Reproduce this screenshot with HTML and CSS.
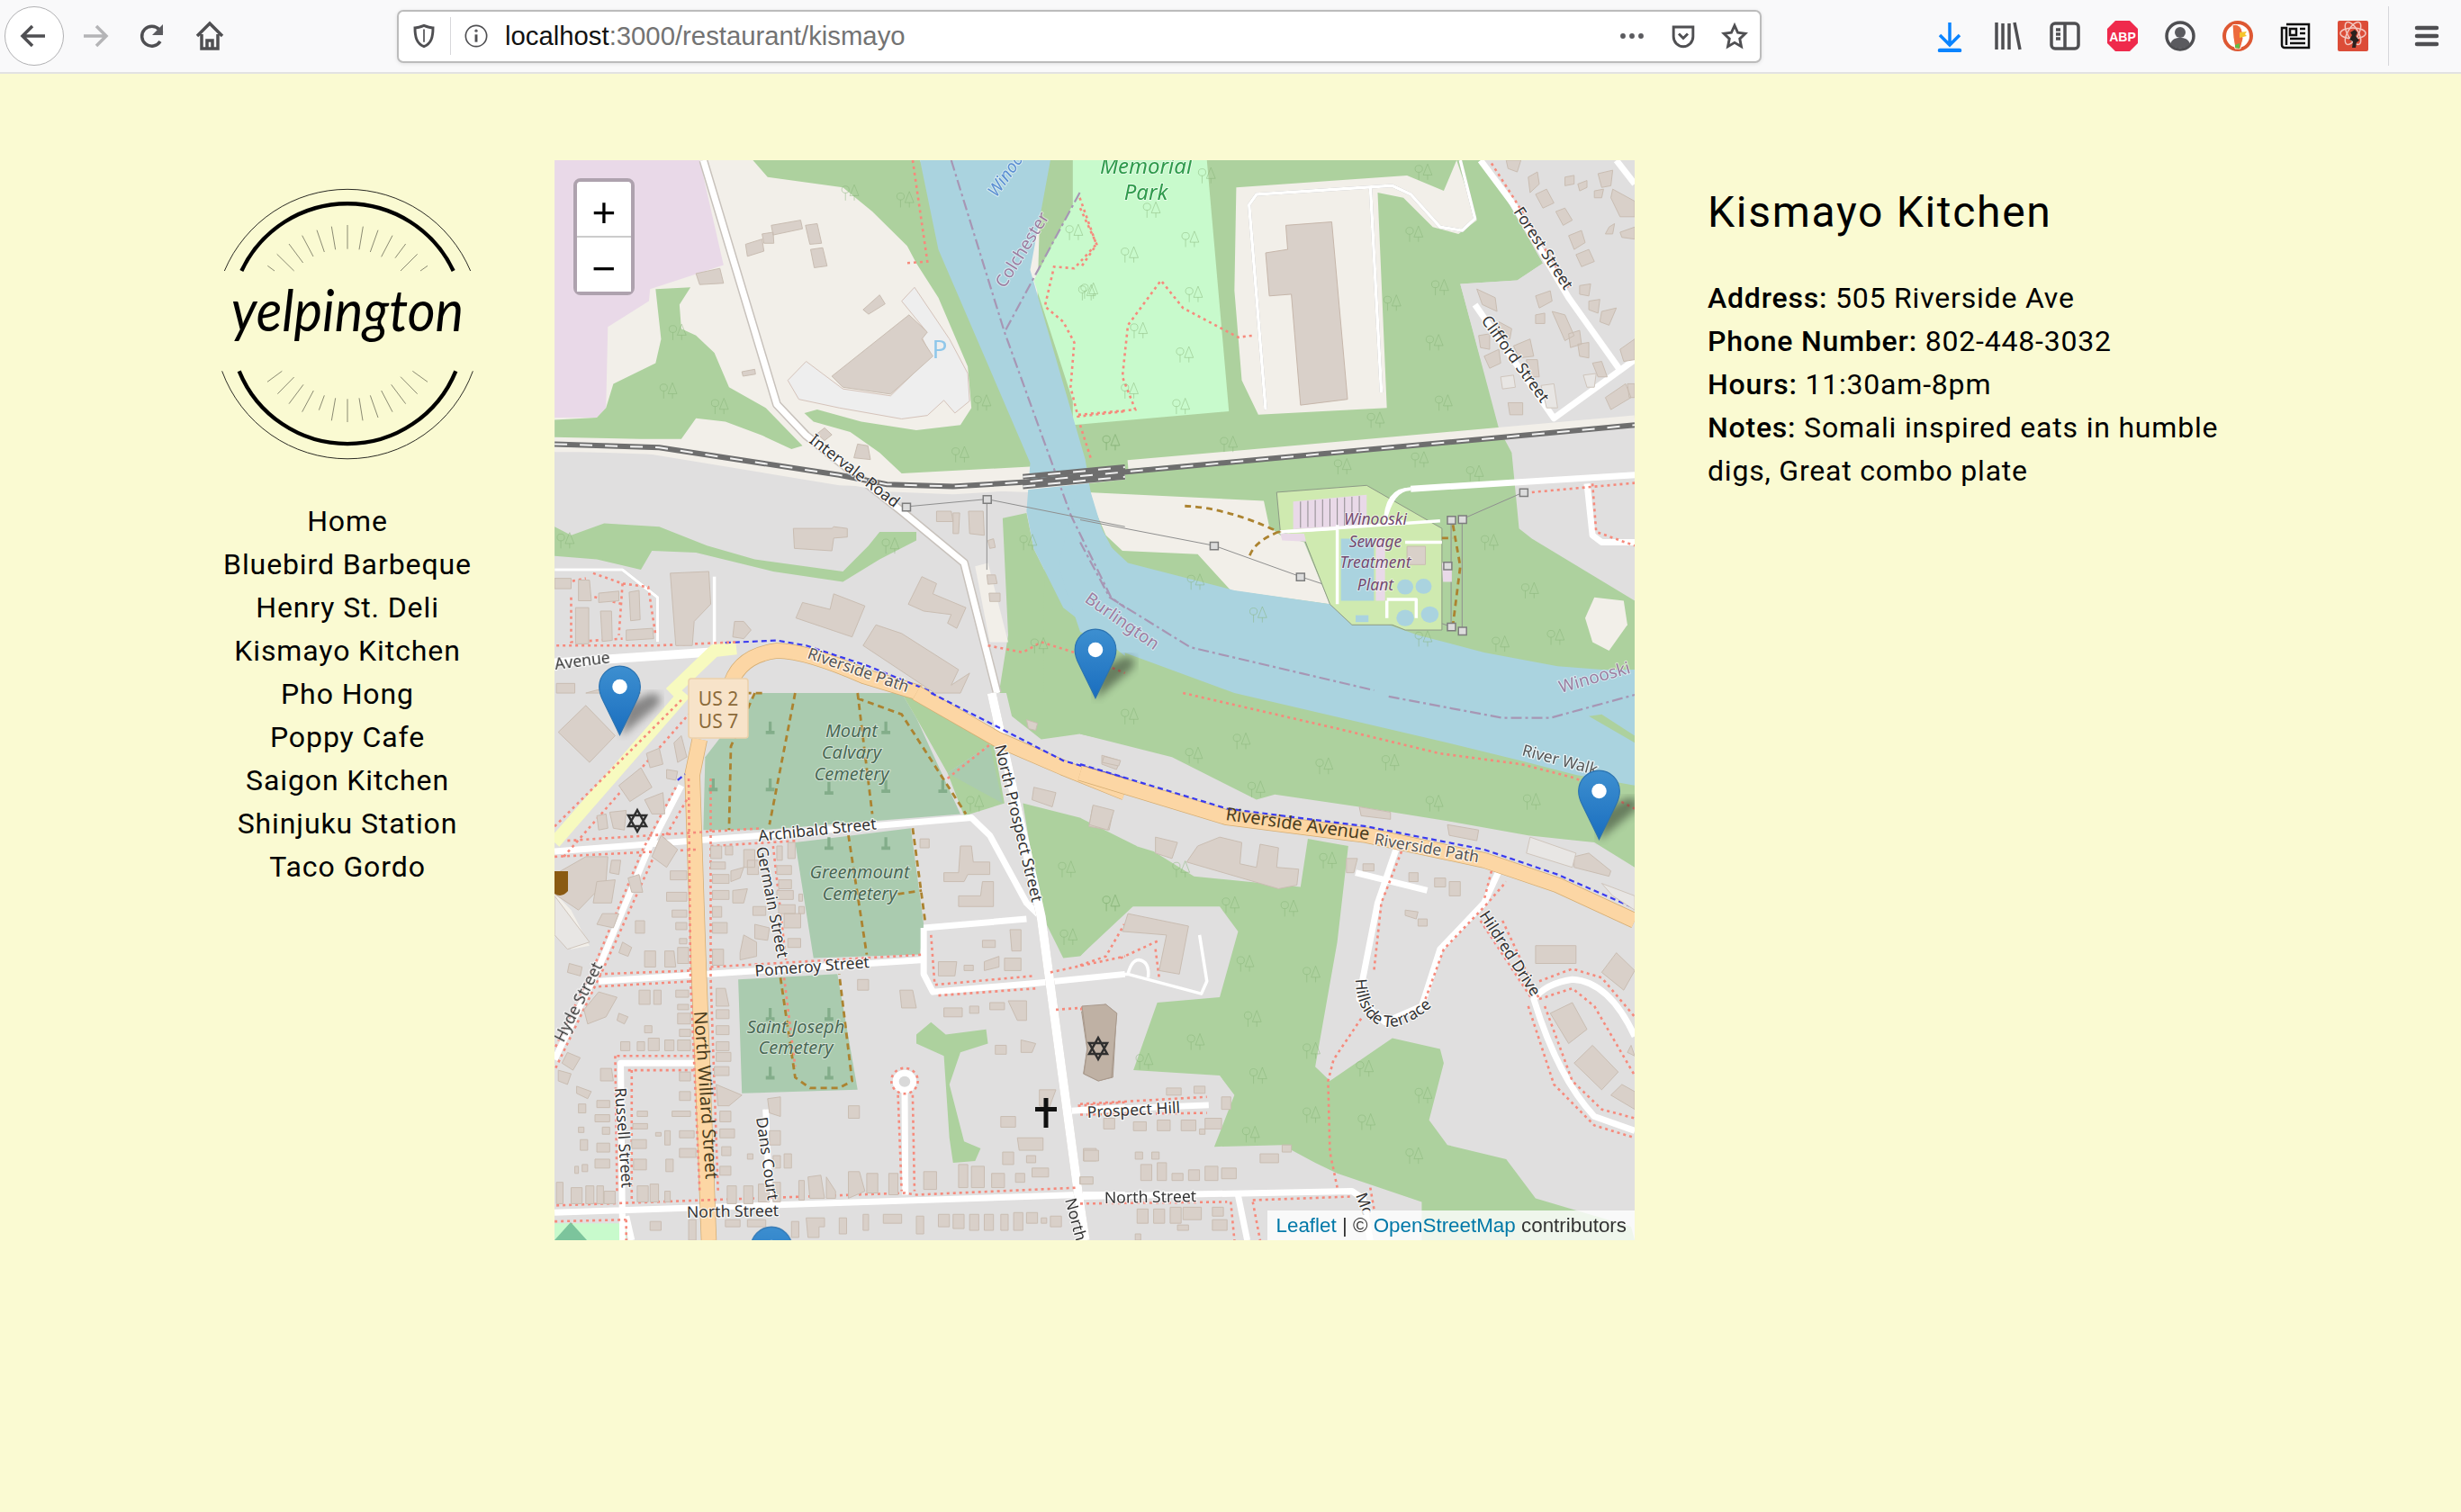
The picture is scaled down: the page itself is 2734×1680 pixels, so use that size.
FILE: index.html
```html
<!DOCTYPE html>
<html>

<head>
    <title>Yelpington</title>
    <link rel="stylesheet" href="styles.css">
</head>

<body>
    <!-- browser toolbar -->
    <div class="toolbar">
        <div class="back-btn">
            <svg class="icon" viewBox="0 0 36 36"><path class="ic" d="M30 18H6M16 7 5 18l11 11"/></svg>
        </div>
        <div class="tool-btn">
            <svg class="icon" viewBox="0 0 36 36"><path class="ic ic-off" d="M6 18h24M20 7l11 11-11 11"/></svg>
        </div>
        <div class="tool-btn">
            <svg class="icon" viewBox="0 0 36 36"><path class="ic" d="M27 24a11 11 0 1 1-1-13l3 4"/><path class="ic-fill" d="M30 5v12H18z"/></svg>
        </div>
        <div class="tool-btn">
            <svg class="icon" viewBox="0 0 36 36"><path class="ic" d="M4 18 18 4l14 14M9 16v16h18V16"/><path class="ic" d="M15 32v-9h6v9"/></svg>
        </div>

        <div class="urlbar">
            <svg class="url-icon" viewBox="0 0 36 36"><path class="ic" d="M18 4c5 2 8 3 12 3 0 12-2 21-12 25C8 28 6 19 6 7c4 0 7-1 12-3z"/><path class="ic-thin" d="M18 9v17"/></svg>
            <div class="url-sep"></div>
            <svg class="url-icon" viewBox="0 0 36 36"><circle class="ic-thin" cx="18" cy="18" r="14"/><path class="ic" d="M18 16v10"/><circle class="ic-fill" cx="18" cy="11" r="2"/></svg>
            <div class="url-text">localhost<span class="url-rest">:3000/restaurant/kismayo</span></div>
            <svg class="url-icon url-end" viewBox="0 0 36 36"><circle class="ic-fill" cx="6" cy="18" r="3.5"/><circle class="ic-fill" cx="18" cy="18" r="3.5"/><circle class="ic-fill" cx="30" cy="18" r="3.5"/></svg>
            <svg class="url-icon url-end" viewBox="0 0 36 36"><path class="ic" d="M5 6h26v13a13 13 0 0 1-26 0z"/><path class="ic" d="m12 15 6 6 6-6"/></svg>
            <svg class="url-icon url-end" viewBox="0 0 36 36"><path class="ic" d="m18 4 4.300 9.500 10 1.200-7.400 7 2 10.300L18 26.800 9.100 32l2-10.300-7.400-7 10-1.200z"/></svg>
        </div>

        <div class="tool-btn tool-first">
            <svg class="icon" viewBox="0 0 36 36"><path class="ic-blue" d="M18 3v25M7 17l11 11 11-11"/><path class="ic-blue ic-wide" d="M7 34h22"/></svg>
        </div>
        <div class="tool-btn">
            <svg class="icon" viewBox="0 0 36 36"><path class="ic" d="M6 3v30M13 4v29M20 4v29M26 3l6 30"/></svg>
        </div>
        <div class="tool-btn">
            <svg class="icon" viewBox="0 0 36 36"><rect class="ic" x="3" y="4" width="30" height="28" rx="4"/><path class="ic" d="M18 4v28M8 11h5M8 16h5M8 21h5"/></svg>
        </div>
        <div class="tool-btn">
            <svg class="icon" viewBox="0 0 36 36"><path class="abp" d="M10 1h16l9 9v16l-9 9H10l-9-9V10z"/><text class="abp-text" x="18" y="24">ABP</text></svg>
        </div>
        <div class="tool-btn">
            <svg class="icon" viewBox="0 0 36 36"><circle class="ic" cx="18" cy="18" r="15"/><circle class="ic-fill" cx="18" cy="14" r="6"/><path class="ic-fill" d="M7 27c2-6 6-7 11-7s9 1 11 7c-6 6-16 6-22 0z"/></svg>
        </div>
        <div class="tool-btn">
            <svg class="icon" viewBox="0 0 36 36"><circle class="ddg" cx="18" cy="18" r="17"/><circle class="ddg-in" cx="18" cy="18" r="14"/><path class="ddg-duck" d="M12 6c5-2 10 1 11 7l1 8-3 11h-6l-2-12z"/><path class="ddg-bill" d="m20 14 8-1-2 3 2 2-8 2z"/><path class="ddg-tie" d="m15 28 5-2v6l-5-1z"/></svg>
        </div>
        <div class="tool-btn">
            <svg class="icon" viewBox="0 0 36 36"><path class="ic-black" d="M8 5h25v26H6a3 3 0 0 1-3-3V9h5v19"/><path class="ic-black" d="M12 10h7v7h-7zM23 10h6M23 15h6M12 21h17M12 26h17"/></svg>
        </div>
        <div class="tool-btn">
            <svg class="icon" viewBox="0 0 36 36"><rect class="react-bg" x="1" y="1" width="34" height="34" rx="2"/><ellipse class="react-ring" cx="18" cy="15" rx="14" ry="6"/><ellipse class="react-ring" cx="18" cy="15" rx="14" ry="6" transform="rotate(60 18 15)"/><ellipse class="react-ring" cx="18" cy="15" rx="14" ry="6" transform="rotate(-60 18 15)"/><path class="react-man" d="M20 11l3 3-2 4 4 5-3 2-1 6h-4l1-7-4-2 3-5-2-3z"/></svg>
        </div>
        <div class="tool-sep"></div>
        <div class="tool-btn">
            <svg class="icon" viewBox="0 0 36 36"><path class="ic ic-wide" d="M7 9h22M7 18h22M7 27h22"/></svg>
        </div>
    </div>

    <div class="page">
        <div class="sidebar">
            <svg class="logo" viewBox="0 0 1140 1020">
                <path class="arc-thin" d="M148 333A445 445 0 0 1 968 333"/>
                <path class="arc-thick" d="M205 333A390 390 0 0 1 911 333"/>
                <path class="arc-thin" d="M140 667A445 445 0 0 0 976 667"/>
                <path class="arc-thick" d="M197 667A390 390 0 0 0 919 667"/>
                <path class="rays" d="M292 316 315 333M323 277 380 333M363 243 410 306M407 215 444 285M456 197 481 270M505 185 518 262M558 180V260M610 185 597 262M660 197 634 270M708 215 671 286M752 243 717 290M791 277 735 333M825 316 801 333"/>
                <path class="rays" d="M340 667 291 703M380 687 325 743M411 712 363 776M445 732 407 803M481 748 463 797M518 757 505 832M558 760V837M597 757 609 832M634 748 660 822M671 732 708 803M704 712 752 776M735 686 791 743M775 667 825 703"/>
                <text class="logo-text" x="558" y="535" textLength="775" lengthAdjust="spacingAndGlyphs">yelpington</text>
            </svg>
            <nav class="nav">
                <a href="#">Home</a>
                <a href="#">Bluebird Barbeque</a>
                <a href="#">Henry St. Deli</a>
                <a href="#">Kismayo Kitchen</a>
                <a href="#">Pho Hong</a>
                <a href="#">Poppy Cafe</a>
                <a href="#">Saigon Kitchen</a>
                <a href="#">Shinjuku Station</a>
                <a href="#">Taco Gordo</a>
            </nav>
        </div>

        <div class="map">
            <svg class="map-svg" viewBox="0 0 1200 1200">
                <defs>
                    <g id="t"><circle cx="12" cy="16" r="10"/><path d="M12 26v22M36 2l12 32H24zM36 34v14"/></g>
                    <g id="c"><path d="M8 0h8v26h8v10H0V26h8z"/></g>
                    <g id="pin">
                        <path class="pin-body" d="M12.500.6C5.900.6.6 6 .6 12.500c0 2.500 1 5.800 2.400 8.500l9.500 19.400L22 21c1.400-2.700 2.400-6 2.400-8.500C24.400 6 19.100.6 12.500.6z"/>
                        <circle class="pin-dot" cx="12.500" cy="12.500" r="4.300"/>
                    </g>
                    <linearGradient id="pinfill" x1="0" y1="0" x2="0" y2="1">
                        <stop offset="0" stop-color="#3d8fd0"/>
                        <stop offset="1" stop-color="#1a6ebf"/>
                    </linearGradient>
                    <filter id="soft"><feGaussianBlur stdDeviation="5"/></filter>
                </defs>

                <g class="tiles">
                    <rect class="grey" width="1200" height="1200"/>

                    <!-- land -->
                    <g class="q1">
                        <path class="plain" d="M15 21H1568V985H1310L790 965 240 868H15z"/>
                        <path class="school" d="M15 21H410L475 325 275 395 272 430 160 505 155 740 130 768H15z"/>
                        <path class="wood" d="M555 21H1010L1320 910 960 930 900 870 820 810 720 780 695 755 730 745 850 780 1000 805 1120 790 1150 740 1140 620 1060 420 1000 320 975 270 880 170 800 100 595 70z"/>
                        <path class="wood" d="M15 775 130 768 155 740 175 670 290 610 305 540 290 395 385 390 355 440 360 510 400 530 450 580 490 680 590 740 690 850 660 860 580 820 480 780 400 770 360 830 250 830 15 825z"/>
                        <path class="wood" d="M15 1085 60 1110 150 1075 300 1085 430 1140 560 1180 800 1215 870 1140 900 1100 1000 1100 1000 1125 900 1180 800 1245 610 1215 400 1160 280 1155 250 1210 130 1180 15 1170z"/>
                        <path class="wood" d="M1235 1060 1300 1045 1320 1150 1400 1320 1568 1440V1568H1225L1250 1400z"/>
                        <path class="plain" d="M1160 1200 1195 1190 1250 1420H1200z"/>
                        <path class="wood" d="M1340 21H1568V1000H1460L1320 800z"/>
                    </g>
                    <g class="q2">
                        <path class="wood" d="M-90 21H1100L1180 170 1260 320 1190 370 1035 380 1140 800 1175 870 1195 1090 1230 1120 1510 1300V1568H-100z"/>
                    </g>
                    <g class="q1">
                        <path class="park" d="M1445 21H1568V750L1440 770 1420 700 1320 370 1445 110z"/>
                    </g>
                    <g class="q2">
                        <path class="park" d="M-20 21H345L405 750-20 790z"/>
                        <path class="plain" d="M425 100 890 65 990 110 1025 21 1080 195 1030 235 960 215 880 130 810 115 835 740 485 760 440 660 420 400z"/>
                        <path class="plain" d="M20 985 500 1010 515 1085 545 1110 610 1130 680 1310 410 1270 320 1165 115 1155 70 1110z"/>
                        <path class="plain" d="M1400 1290 1480 1300 1490 1370 1440 1445 1395 1420 1375 1350z"/>
                        <path class="grey" d="M1100 21H1510V830H1150L1035 380 1190 370 1260 320 1180 170z"/>
                    </g>
                    <g class="q3">
                        <path class="wood" d="M1245 0H1600V150L1445 115 1340 130 1260 65z"/>
                        <path class="cem" d="M420 385 425 180 560 0H960L1000 70 1120 340 580 385z"/>
                        <path class="wood" d="M960 0H1010L1215 135 1085 225 1000 70z"/>
                        <path class="wood" d="M1085 225 1210 140 1240 310 1130 345z"/>
                        <path class="cem" d="M1085 225 1200 145 1235 310z"/>
                        <path class="cem" d="M670 420 985 380 1020 650 1010 735 720 745z"/>
                        <path class="cem" d="M515 805 785 790 840 1115 525 1125z"/>
                        <path class="wood" d="M1290 310 1445 350 1600 430V590L1445 740 1400 745 1340 620z"/>
                        <path class="wood" d="M1000 960 1040 925 1080 960 1190 945 1195 985 1120 1010 1090 1100 1130 1260 1175 1280 1160 1315 1100 1320 1090 1250 1075 1020 1000 985z"/>
                        <path class="park" d="M15 1490H210V1538H15z"/>
                        <path class="plain" d="M15 560 60 610 110 710 60 720 15 660z"/>
                    </g>
                    <g class="q4">
                        <path class="wood" d="M0 0H1510V490L1400 420 1220 400 1000 360 760 320 530 285 480 300 250 180 0 115z"/>
                        <path class="wood" d="M0 350 40 395 200 445 310 515 600 545 620 410 730 430 700 700 640 1050 680 1090 850 970 980 1000 990 1040 950 1200 1000 1270 1160 1310 1240 1420 1500 1500 1510 1538H930V1430L700 1350 640 1320 550 1270 365 1275 420 1130 380 1075 145 1060 210 870 380 855 430 670 380 600 130 600 0 740z"/>
                    </g>

                    <!-- water -->
                    <g class="q1">
                        <path class="water" d="M1010 21H1365L1310 340 1460 890 1475 990 1500 1080 1568 1220V1460L1400 1320 1320 1150 1300 1040 1310 900 1060 280z"/>
                    </g>
                    <g class="q2">
                        <path class="water" d="M10 900 30 990 70 1130 130 1190 420 1270 680 1310 920 1400 1100 1450 1300 1490 1420 1500 1510 1500V1568H420L120 1450 0 1390-60 1200z"/>
                    </g>
                    <g class="q4">
                        <path class="water" d="M420 0H1510V260L1350 230 1200 190 1000 140z"/>
                        <path class="wood" d="M1385 65 1420 60 1510 120V140z"/>
                    </g>

                    <!-- boundaries and power lines -->
                    <g class="q1">
                        <path class="admin" d="M1095 21 1240 520 1420 1050 1530 1290 1568 1320M1445 115 1240 520"/>
                        <path class="power" d="M970 1027 1192 1005 1568 1085M1192 1005V1210"/>
                    </g>
                    <g class="q2">
                        <path class="admin" d="M0 1130 80 1290 300 1435 600 1510 800 1560"/>
                        <path class="power" d="M0 1065 365 1140 600 1230 1010 1375M1040 1063 1207 985M1010 1065V1375M1040 1063V1387"/>
                    </g>
                    <g class="q4">
                        <path class="admin" d="M840 10 1150 70H1280L1510 5"/>
                    </g>

                    <!-- sewage plant -->
                    <g class="q2">
                        <path class="plant" d="M535 985 780 965 985 1090V1385H885L850 1370H740L680 1310 610 1120 545 1100z"/>
                        <path class="tank" d="M710 1120H800V1300H710z"/>
                        <circle class="tank" cx="885" cy="1260" r="22"/>
                        <circle class="tank" cx="935" cy="1258" r="22"/>
                        <circle class="tank" cx="885" cy="1350" r="24"/>
                        <circle class="tank" cx="952" cy="1340" r="24"/>
                        <path class="tank" d="M750 1342H785V1362H750z"/>
                        <path class="school" d="M580 1012 780 992V1080L580 1092zM545 1105H610L615 1128 550 1125zM985 1190H1012V1245H988zM805 1120H830V1300H805z"/>
                        <path class="stripe" d="M600 1012V1088M620 1010V1086M640 1008V1086M660 1006V1084M680 1004V1084M700 1002V1082M720 1000V1082M740 998V1080M760 996V1080"/>
                        <path class="bld" d="M890 1142H940V1195H890z"/>
                        <path class="thin" d="M545 1100 980 1068M700 1080V1310M835 1300V1350M835 1296H915V1350M885 1130H985"/>
                        <path class="thin" d="M830 1080Q830 975 900 975"/>
                    </g>

                    <!-- roads -->
                    <g class="q1">
                        <path class="casing" d="M420 21 620 730 700 820 960 1040 1130 1190 1220 1568"/>
                        <path class="road" d="M420 21 620 730 700 820 960 1040 1130 1190 1220 1568"/>
                        <path class="road thin" d="M450 1230V1440"/>
                        <path class="service" d="M15 1210H200L295 1290V1420"/>
                        <path class="road wide" d="M15 1480 450 1448"/>
                        <path class="trunk" d="M510 1438 450 1445 330 1568"/>
                        <path class="orange-case" d="M490 1560Q510 1460 620 1445 700 1445 860 1520L1010 1568"/>
                        <path class="orange" d="M490 1560Q510 1460 620 1445 700 1445 860 1520L1010 1568"/>
                        <path class="cycle" d="M480 1422 620 1415 700 1430 870 1490 1050 1568"/>
                    </g>
                    <g class="q2">
                        <path class="service" d="M505 745 460 150 480 120 850 95 900 120 980 215 1040 225 1075 190 1035 21M790 95 820 695"/>
                        <path class="road" d="M1090 21 1180 150 1330 420 1470 630M1510 600 1290 770 1075 440M1460 21 1510 90"/>
                        <path class="road thin" d="M545 1100 700 1090M830 1070Q850 975 900 975M830 1070H880"/>
                        <path class="road" d="M900 975 1510 935M1380 960 1395 1110 1420 1130H1510"/>
                    </g>
                    <g class="q3">
                        <path class="road" d="M15 445 580 400 1150 350 1200 400 1300 590 1335 625M360 260 270 440 140 760 15 1030M135 810 1020 750M1020 660 1300 635M1020 660V790L1045 840 1330 815 1568 790M400 1040H195L200 1538M15 1460 1440 1410 1568 1410M590 1170 600 1430M970 1410 968 1095M1410 1175 1568 1165M210 1470 225 1538"/>
                        <path class="casing" d="M1205 0 1340 630 1440 1400 1460 1538"/>
                        <path class="road wide" d="M1205 0 1340 630 1440 1400 1460 1538"/>
                        <circle class="cul" cx="968" cy="1092" r="24"/>
                        <path class="trunk" d="M370 0 15 420"/>
                        <path class="orange-case" d="M1000 0 1220 130 1400 210 1568 280M410 130 390 230 405 700 430 1400 435 1538"/>
                        <path class="orange" d="M1000 0 1220 130 1400 210 1568 280M410 130 390 230 405 700 430 1400 435 1538"/>
                        <path class="cycle" d="M1040 0 1230 100 1400 190 1568 240M350 245 370 228"/>
                    </g>
                    <g class="q4">
                        <path class="road" d="M0 1415 740 1400 770 1420 790 1538M0 1172 350 1158M860 440 810 590 770 800 760 860 830 925 930 880 980 720 1100 590 1140 500M750 505 945 555"/>
                        <path class="road thin" d="M0 800 130 790 330 845 345 810 325 680M130 790Q140 750 160 750 190 755 185 800"/>
                        <path class="road" d="M430 1412 455 1538M1510 965Q1440 810 1340 805 1270 815 1235 860 1300 1080 1400 1190L1510 1230"/>
                        <path class="orange-case" d="M0 225 400 350 780 400 1100 470 1300 540 1510 640"/>
                        <path class="orange" d="M0 225 400 350 780 400 1100 470 1300 540 1510 640"/>
                        <path class="cycle" d="M0 200 400 325 780 375 1100 440 1300 510 1510 605"/>
                    </g>

                    <!-- rail -->
                    <g class="q1">
                        <path class="rail-bed" d="M15 852 300 862 790 945 920 970 1100 978 1300 965 1568 935"/>
                        <path class="rail" d="M15 845 300 855 790 935 920 962 1100 968 1300 955 1568 925"/>
                        <path class="rail-dash" d="M15 845 300 855 790 935 920 962 1100 968 1300 955 1568 925"/>
                        <path class="rail" d="M1290 940 1568 912M1290 968 1568 940"/>
                        <path class="rail-dash" d="M1290 940 1568 912M1290 968 1568 940"/>
                    </g>
                    <g class="q2">
                        <path class="rail-bed" d="M130 905 1510 775"/>
                        <path class="rail" d="M0 938 1510 790"/>
                        <path class="rail-dash" d="M0 938 1510 790"/>
                    </g>

                    <!-- paths -->
                    <g class="q1">
                        <path class="foot" d="M990 21 1030 315 970 320M1445 130 1490 265 1430 335 1375 330 1350 445 1400 490 1430 550 1420 680 1440 765 1568 750M1195 1430 1290 1450 1340 1420 1430 1450 1568 1510"/>
                        <path class="foot" d="M20 1430 290 1430 510 1420M30 1250 100 1235M120 1220 200 1250 270 1260 290 1400M60 1290 60 1420 200 1410M200 1250 190 1400M90 1280 200 1310"/>
                        <path class="track" d="M580 1568 500 1568"/>
                    </g>
                    <g class="q2">
                        <path class="foot" d="M-5 760 150 745 115 650 130 500 220 370 280 450 430 535 470 530M0 790 30 890M0 160 45 265 0 335"/>
                        <path class="foot" d="M1120 30 1180 130 1330 390M1230 985 1510 958M1395 960 1405 1100 1510 1140"/>
                        <path class="track" d="M285 1025Q400 1030 540 1100Q470 1130 460 1175M985 1118H1015M1015 1080 1035 1200 1015 1370"/>
                    </g>
                    <g class="q3">
                        <path class="foot" d="M50 415 580 380M15 460 400 440M440 430 680 415M345 265 255 440 130 750 15 1000M375 300 285 460 150 770 15 1060M15 375 360 20M40 460 380 60M135 790 390 780M135 825 390 810M440 770 1020 735M1040 680 1050 820 1320 795M1060 850 1330 830M380 240 385 800 410 1400M440 240 440 800 460 1400M185 1020H400M215 1060H400M180 1020 185 1400M225 1060 225 1430M610 430 645 750M640 800 670 1050M20 1440 970 1405 1000 1410 1440 1390M1380 890 1510 880M990 1130 995 1400M950 1130 960 1400M1440 1160 1568 1150"/>
                        <path class="foot" d="M1085 240 1200 145M15 1485 210 1480M60 1490 65 1530M210 1480 210 1538M1365 785 1568 740"/>
                        <circle class="foot" cx="968" cy="1090" r="36"/>
                        <path class="track" d="M560 0 495 150 490 385M670 0 600 370M840 0 880 340M840 15 960 60 1135 340M815 400 865 735M990 380 1025 650M950 565 1015 555M630 800 670 1080 710 1110H790L825 1090 790 790"/>
                    </g>
                    <g class="q4">
                        <path class="foot" d="M280 0 700 100 980 170 1200 200 1350 240 1510 325"/>
                        <path class="foot" d="M0 765 70 740 120 650M110 745 215 695M205 720 215 800M875 445 820 590 800 780M940 860 990 720 1110 590 1160 530M1120 500 1100 580M1090 640 1230 860M1150 640 1250 860M1250 810 1340 775 1420 800 1510 910M1250 860 1340 830 1400 880 1510 1075M1220 880 1290 1100 1400 1215 1510 1250M1265 880 1340 1090 1420 1170 1510 1195"/>
                        <path class="foot" d="M0 888H50M0 1155 345 1135M0 1185 345 1180M765 915 690 1030 675 1090 680 1290 700 1390M0 1435 400 1430M470 1425 740 1415M790 1390 800 1450M410 1430 420 1538M470 1430 490 1538"/>
                    </g>

                    <!-- buildings -->
                    <g class="q1">
                        <path class="lot" d="M650 660 700 605 800 685 930 705 1040 590 1015 535 1025 515 960 430 995 390 1090 540 1140 640 1145 720 1105 755 1075 718 1030 762 960 772 790 740 680 715z"/>
                        <path class="bld" d="M535 265 580 250 585 285 540 300zM580 235 610 230 612 262 585 262zM605 210 685 195 690 220 610 238zM698 210 730 205 742 262 710 265zM712 280 745 275 757 328 722 333zM400 350 465 335 475 378 410 382zM525 635 560 628 562 642 528 648zM770 648 980 470 1030 520 1015 540 1045 590 930 700 800 680zM855 455 900 412 915 438 870 468zM730 815 750 798 770 818 750 835zM840 845 868 850 875 890 830 885z"/>
                        <path class="bld" d="M665 1090H770L775 1085 812 1090V1115L775 1118 770 1155 668 1148zM1055 1040H1095L1100 1070H1055zM1100 1045H1118L1115 1105H1100zM1142 1040H1182L1185 1110 1145 1105zM1195 1125 1210 1120 1215 1145 1200 1148zM1192 1225H1215L1220 1250 1195 1252zM1198 1278H1228V1302H1200z"/>
                        <path class="bld" d="M775 1280 860 1315 825 1405 672 1350 690 1305 765 1325zM1015 1230 1055 1250 1045 1280 1135 1320 1110 1380 1085 1365 1095 1340 1020 1330 978 1310zM890 1370 960 1395 1115 1500 1095 1545 1145 1510 1120 1568H1050L855 1430zM330 1220 435 1215 440 1310 395 1360 390 1430 345 1430z"/>
                        <path class="bld" d="M15 1235H60V1265H15zM80 1240H110L115 1300H80zM135 1278 190 1272V1300L135 1305zM218 1275 245 1270 248 1355 222 1358zM72 1320H108V1425H72zM140 1330H170L172 1415 145 1418zM210 1385 282 1380 285 1410 210 1415zM505 1360H530L550 1385 530 1410 500 1405z"/>
                        <path class="bld" d="M100 1568 180 1545 250 1568zM20 1540H70V1568H20z"/>
                    </g>
                    <g class="q2">
                        <path class="bld-big" d="M560 210 685 200 728 715 600 732 575 410 515 415 505 290 565 280z"/>
                        <path class="bld" d="M1160 21 1200 21 1190 55 1165 45zM1220 70 1245 55 1250 90 1225 115zM1240 120 1270 105 1290 145 1260 160zM1295 170 1320 160 1340 195 1315 210zM1330 240 1365 225 1375 260 1345 280zM1350 295 1385 280 1400 315 1365 330zM1320 70 1345 65 1345 90 1320 95zM1355 90 1380 80 1380 100 1360 110zM1410 60 1450 50 1445 95 1420 100zM1400 110 1425 105 1420 130 1400 130zM1450 105 1510 140V185L1470 185 1445 130zM1440 215 1455 205 1450 235 1430 235zM1470 230 1510 215V250L1475 245zM1360 385 1390 380 1385 415 1360 410zM1385 430 1415 425 1410 465 1385 455zM1420 460 1460 450 1440 500 1415 490zM1240 415 1280 400 1285 430 1250 450zM1240 470 1265 465 1265 495 1240 495zM1285 460 1320 470 1345 530 1320 545zM1330 525 1360 515 1365 555 1335 565zM1355 555 1385 550 1385 595 1360 590zM1080 395 1130 420 1135 460 1095 440zM1140 490 1175 510 1170 540 1140 530zM1085 530 1115 525 1115 570 1090 565zM1180 560 1225 540 1235 590 1195 595zM1100 590 1140 570 1145 610 1115 625zM1215 600 1245 600 1250 650 1220 650zM1395 610 1420 605 1435 650 1410 650zM1165 725H1205L1205 760H1170zM1430 710 1485 670 1500 710 1445 745zM1490 670 1510 670V710H1495zM1470 570 1510 540V600L1480 605z"/>
                        <path class="bld-pale" d="M1145 650 1180 645 1185 680 1150 685zM1370 645 1405 640 1400 680 1380 680zM1255 675 1290 670 1300 740H1270z"/>
                    </g>
                    <g class="q3">
                        <path class="bld-pale" d="M15 570 110 700 50 720 15 680z"/>
                        <path class="bld" d="M25 110 100 35 180 120 110 195zM190 260 250 210 280 265 220 305zM260 300 310 280 315 340 280 340zM130 345 155 340 160 380 135 385zM165 335 210 330 205 385 175 380zM320 215 350 220 345 245 320 240zM265 170 300 155 310 200 275 210zM340 140 360 120 375 180 350 195zM15 510 100 460 160 460 155 530 80 610 15 565z"/>
                        <path class="bld" d="M305 400 350 440 320 490 280 460zM170 470 195 470 190 510 165 505zM130 530 180 525 170 590 120 590zM145 620 190 620 175 660 130 650zM215 520 245 510 255 560 225 560zM235 640 260 640 260 675 235 675zM200 700 225 715 215 740 190 730zM260 725H290V770H260zM315 725H340L345 770H315zM350 715H380V760H350zM330 500H375V525H330zM320 560H375V585H320zM335 610H375V630H335zM345 645H375V665H345zM355 690H375V705H355z"/>
                        <path class="bld" d="M55 760 90 770 85 795 50 785zM245 835H275V875H245zM285 835H305V875H285zM345 835H380V855H345zM350 875H380V890H350zM190 900 215 910 205 930 185 920zM135 840 185 855 155 910 105 930 95 890zM260 935H280V955H260zM350 900H385V930H350zM355 945H385V965H355zM195 980H220V1005H195zM240 980H260V1005H240zM270 970H300V1005H270zM315 975H340V1005H315zM350 975H385V1005H350zM50 1010 85 1025 65 1060 35 1040zM25 1060 60 1070 50 1100 25 1090zM140 1055H170L175 1090H140zM75 1105 115 1120 105 1140 75 1125zM80 1155H100V1180H80zM130 1145H165V1165H130zM125 1185H165V1205H125zM80 1220H95V1235H80zM355 1065H385V1090H355zM355 1120H385V1145H355zM335 1175H385V1190H335zM240 1175H268V1190H240zM228 1210H268V1225H228zM145 1220H165V1240H145zM315 1230H330V1270H315zM225 1255H265V1280H225zM130 1265H165V1290H130zM290 1235H305V1245H290zM355 1230H395V1250H355zM85 1255H105V1285H85zM125 1310H165V1335H125zM230 1310H265V1340H230zM355 1280H400V1305H355zM318 1310H338V1345H318zM70 1330H80V1350H70zM90 1325H105V1345H90zM20 1375H38V1435H20zM60 1390H90V1435H60zM100 1385H122V1435H100zM130 1385H148V1435H130zM150 1400H180V1435H150zM240 1385H270V1430H240zM275 1380H298V1430H275zM315 1400H330V1430H315z"/>
                        <path class="bld" d="M440 430H470V465H440zM480 430H500V455H480zM440 475H480V495H440zM445 510H490V535H445zM495 500 530 490 520 520 495 530zM530 440H560V490H530zM620 430H635V470H620zM650 420H670V465H650zM540 470H570V510H540zM445 555H490V580H445zM500 555 540 550 530 590 500 590zM620 485H660V510H620zM625 525H660V550H625zM620 555H665V580H620zM680 565H690V585H680zM625 595H670V620H625zM680 600H695V620H680zM445 600H470V630H445zM555 600 590 600V625H555zM640 620H685V660H640zM445 645H485V675H445zM560 650 600 660 595 695 560 690zM530 680 565 700 565 740 520 750 520 730zM445 720H475V765H445zM650 690H685V715H650z"/>
                        <path class="bld" d="M455 830H480L490 880H455zM455 890H490V915H455zM455 935H490V960H455zM455 980H490V1005H455zM455 1010H495V1035H455zM450 1050H490V1075H450zM455 1100 525 1130 490 1160H460zM465 1175H495V1205H465zM465 1225H505V1250H465zM470 1275H495V1300H470zM465 1330H495V1355H465zM485 1385H510V1435H485zM530 1385H555V1435H530zM570 1380H600V1430H570zM610 1375H630V1430H610zM640 1295H660V1335H640zM610 1300H630V1335H610zM540 1295H555V1310H540zM600 1230H630V1270H600zM595 1140 630 1135 630 1190 600 1180zM815 1160H845V1195H815zM680 1370H695V1425H680zM705 1360 740 1355 750 1420H710zM755 1360 780 1400V1420H755zM815 1345H845L860 1400 815 1420zM865 1350H895V1405H865zM925 1350H950V1410H925zM1020 1345H1055V1395H1020zM1115 1325H1140V1390H1115zM1150 1330H1185V1390H1150zM1205 1350H1240V1390H1205zM1270 1350H1295V1375H1270zM1315 1335H1360V1360H1315z"/>
                        <path class="bld" d="M1010 410H1035V435H1010zM1120 430H1150L1155 475H1200V510H1140L1130 530H1075V505H1115zM1180 530H1210V600H1115V570H1175zM1060 755H1110L1105 795H1060zM1130 765H1155V780H1130zM1180 695H1215V715H1180zM1255 665H1285V725H1260zM1185 755 1225 740V770L1185 780zM1240 745H1285V780H1240zM840 805H870V835H840zM955 835H990L1000 885H960zM1075 885H1125V910H1075zM1145 880H1170V900H1145zM1200 870H1240V890H1200zM1250 865H1300V920H1275zM1215 990H1245V1015H1215zM1285 975 1325 985 1315 1010H1285zM1230 1190H1270V1220H1230zM1275 1250H1345V1285H1280zM1335 1115H1380L1360 1170 1335 1160zM1235 1290H1265V1325H1235zM1300 1300H1325V1320H1300zM1455 1280H1490V1315H1455zM1445 1360H1480V1380H1445zM1510 1195H1540V1225H1510z"/>
                        <path class="bld-dark" d="M1450 895 1515 875 1545 900 1535 1080 1495 1090 1455 1070 1465 1000z"/>
                        <path class="bld" d="M1320 265 1380 280 1370 320 1315 300zM1505 175 1555 190 1545 215 1505 200zM1300 75 1330 85 1325 105 1305 100zM1480 320 1535 335 1525 385 1470 375zM275 1485H305V1510H275zM380 1480H400V1538H380zM480 1480H520V1500H480zM540 1480H590V1500H540zM660 1485H680V1530H660zM700 1475H750V1500H735V1530H705zM790 1475H810V1520H790zM855 1465H870V1510H855zM910 1465H960V1490H910zM1000 1470H1020V1520H1000zM1060 1465H1090V1500H1060zM1100 1465H1130V1505H1100zM1145 1465H1170V1510H1145zM1185 1465H1210V1510H1185zM1230 1465H1250V1510H1230zM1265 1460H1290V1510H1265zM1300 1460H1330V1490H1300zM1340 1475H1355V1490H1340zM1365 1470H1395V1500H1365z"/>
                    </g>
                    <g class="q4">
                        <path class="bld" d="M65 178 110 190 105 205 60 195zM760 320 845 335 845 355 765 345zM1000 370 1085 385 1080 415 1005 400zM35 315 92 330 75 385 25 370zM205 405 265 420 250 465 205 450zM320 430 380 405 440 420 435 480 480 490 490 425 540 435 535 490 595 495 590 540 540 550 290 475zM725 465H755L745 505H725zM770 480H800V500H770zM895 505H920V530H895zM965 520H995V545H965zM1005 530H1035V570H1005zM885 610 920 615 915 635 885 625zM920 635H945V655H920zM1345 460 1385 450 1445 500 1440 515 1345 490z"/>
                        <path class="bld-pale" d="M1225 405 1350 450 1340 490 1215 450zM1420 535 1510 570V610L1450 570z"/>
                        <path class="bld" d="M130 620 295 655 270 790 215 780 235 680 115 670zM1240 710H1350V760H1240zM1420 785 1460 730 1510 780 1480 835zM1280 900 1340 870 1380 945 1330 985zM1345 1040 1395 990 1465 1065 1420 1115zM1445 1130 1475 1100 1510 1120V1170zM1500 990 1510 1020 1490 1010z"/>
                        <path class="bld" d="M235 1110H275V1130H235zM310 1105H340V1125H310zM385 1135H410V1170H385zM145 1205H180V1230H145zM210 1200H245V1230H210zM275 1200H315V1230H275zM340 1195H385V1225H340zM325 1225H340V1240H325zM10 1285H50V1315H10zM150 1290H170V1310H150zM195 1290H215V1310H195zM490 1295H540V1320H490zM550 1270H575V1290H550zM165 1325H195V1370H165zM210 1320H235V1370H210zM250 1350H280V1370H250zM295 1340H325V1370H295zM340 1330H375V1370H340zM385 1335H425V1365H385zM0 1360H35V1380H0z"/>
                        <path class="bld" d="M155 1450H185V1490H155zM200 1450H230V1490H200zM245 1445H275V1490H245zM280 1445H330V1480H280zM360 1445H390V1470H360zM360 1480H400V1510H360zM265 1495H295V1510H265zM150 1520H165V1538H150z"/>
                        <path class="bld-dark" d="M5 880 70 875 100 900 85 1080 50 1090 10 1070 20 1000z"/>
                    </g>

                    <!-- trees -->
                    <g class="trees q1">
                        <use href="#t" x="795" y="90"/><use href="#t" x="945" y="110"/><use href="#t" x="325" y="495"/><use href="#t" x="300" y="665"/><use href="#t" x="440" y="710"/><use href="#t" x="1155" y="700"/><use href="#t" x="1095" y="850"/><use href="#t" x="1505" y="815"/><use href="#t" x="20" y="1100"/><use href="#t" x="905" y="1115"/><use href="#t" x="1405" y="205"/><use href="#t" x="1440" y="380"/><use href="#t" x="1310" y="1405"/><use href="#t" x="1280" y="1105"/>
                    </g>
                    <g class="trees q2">
                        <use href="#t" x="170" y="140"/><use href="#t" x="275" y="225"/><use href="#t" x="110" y="270"/><use href="#t" x="0" y="375"/><use href="#t" x="285" y="385"/><use href="#t" x="135" y="490"/><use href="#t" x="260" y="560"/><use href="#t" x="110" y="665"/><use href="#t" x="250" y="710"/><use href="#t" x="60" y="815"/><use href="#t" x="380" y="820"/><use href="#t" x="320" y="40"/><use href="#t" x="910" y="30"/><use href="#t" x="885" y="210"/><use href="#t" x="955" y="365"/><use href="#t" x="825" y="410"/><use href="#t" x="940" y="525"/><use href="#t" x="965" y="700"/><use href="#t" x="780" y="750"/><use href="#t" x="690" y="885"/><use href="#t" x="900" y="865"/><use href="#t" x="1050" y="905"/><use href="#t" x="1090" y="1105"/><use href="#t" x="290" y="1220"/><use href="#t" x="1200" y="1245"/><use href="#t" x="1270" y="1380"/><use href="#t" x="1120" y="1400"/><use href="#t" x="460" y="1315"/><use href="#t" x="910" y="1385"/>
                    </g>
                    <g class="trees q3">
                        <use href="#t" x="1385" y="470"/><use href="#t" x="1505" y="565"/><use href="#t" x="1390" y="660"/><use href="#t" x="1135" y="285"/>
                    </g>
                    <g class="trees q4">
                        <use href="#t" x="110" y="40"/><use href="#t" x="415" y="110"/><use href="#t" x="285" y="150"/><use href="#t" x="640" y="180"/><use href="#t" x="820" y="170"/><use href="#t" x="455" y="245"/><use href="#t" x="940" y="285"/><use href="#t" x="1205" y="280"/><use href="#t" x="650" y="445"/><use href="#t" x="250" y="470"/><use href="#t" x="60" y="565"/><use href="#t" x="385" y="570"/><use href="#t" x="545" y="580"/><use href="#t" x="425" y="735"/><use href="#t" x="605" y="765"/><use href="#t" x="445" y="890"/><use href="#t" x="290" y="955"/><use href="#t" x="150" y="1010"/><use href="#t" x="460" y="1050"/><use href="#t" x="750" y="1030"/><use href="#t" x="605" y="980"/><use href="#t" x="910" y="1105"/><use href="#t" x="605" y="1160"/><use href="#t" x="755" y="1180"/><use href="#t" x="440" y="1215"/><use href="#t" x="885" y="1275"/>
                    </g>
                    <g class="graves q3">
                        <use href="#c" x="590" y="80"/><use href="#c" x="905" y="80"/><use href="#c" x="435" y="240"/><use href="#c" x="590" y="240"/><use href="#c" x="750" y="250"/><use href="#c" x="905" y="245"/><use href="#c" x="1060" y="245"/><use href="#c" x="750" y="405"/><use href="#c" x="905" y="405"/><use href="#c" x="590" y="885"/><use href="#c" x="750" y="885"/><use href="#c" x="590" y="1050"/><use href="#c" x="750" y="1050"/>
                    </g>

                    <!-- power line nodes -->
                    <g class="q1"><rect class="node" x="962" y="1017" width="22" height="22"/><rect class="node" x="1182" y="995" width="22" height="22"/></g>
                    <g class="q2"><rect class="node" x="354" y="1130" width="22" height="22"/><rect class="node" x="589" y="1220" width="22" height="22"/><rect class="node" x="1000" y="1055" width="22" height="22"/><rect class="node" x="1030" y="1053" width="22" height="22"/><rect class="node" x="1197" y="975" width="22" height="22"/><rect class="node" x="990" y="1188" width="22" height="22"/><rect class="node" x="1000" y="1365" width="22" height="22"/><rect class="node" x="1030" y="1377" width="22" height="22"/></g>

                    <!-- road shield and symbols -->
                    <rect class="shield" x="149" y="576" width="66" height="66" rx="3"/>
                    <text class="lb-shield" x="182" y="606">US 2</text>
                    <text class="lb-shield" x="182" y="631">US 7</text>
                    <path class="star" d="M92 722 102 740H82zM92 746 82 728H102z"/>
                    <path class="star" d="M604 975 614 993H594zM604 999 594 981H614z"/>
                    <path class="cross" d="M543.500 1042h5v10h9.500v5h-9.500v18h-5v-18h-9.500v-5h9.500z"/>
                    <path class="theatre" d="M0 790H15V812Q8 820 0 815z"/>
                    <path class="theatre-fade" d="M18 1180 36 1200H0z"/>

                    <!-- labels -->
                    <g class="labels">
                        <text class="lb-water" transform="translate(491 42) rotate(-55)">Winooski</text>
                        <text class="lb-admin" transform="translate(500 143) rotate(-58)">Colchester</text>
                        <text class="lb-park" x="657" y="15">Memorial</text>
                        <text class="lb-park" x="657" y="44">Park</text>
                        <text class="lb-p" x="428" y="220">P</text>
                        <text class="lb" transform="translate(282 313) rotate(37.600)">Intervale Road</text>
                        <text class="lb" transform="translate(1 566) rotate(-7)">Avenue</text>
                        <text class="lb lb-grey" transform="translate(280 553) rotate(19)">Riverside Path</text>
                        <text class="lb-admin" transform="translate(588 490) rotate(35)">Burlington</text>
                        <text class="lb-admin" transform="translate(1118 592) rotate(-16)">Winooski</text>
                        <text class="lb" transform="translate(1065 57) rotate(57)">Forest Street</text>
                        <text class="lb" transform="translate(1029 178) rotate(54)">Clifford Street</text>
                        <text class="lb-plant" x="912" y="405">Winooski</text>
                        <text class="lb-plant" x="912" y="430">Sewage</text>
                        <text class="lb-plant" x="912" y="453">Treatment</text>
                        <text class="lb-plant" x="912" y="478">Plant</text>
                        <text class="lb lb-grey" transform="translate(1074 661) rotate(15)">River Walk</text>
                        <text class="lb-cem" x="330" y="641">Mount</text>
                        <text class="lb-cem" x="330" y="665">Calvary</text>
                        <text class="lb-cem" x="330" y="689">Cemetery</text>
                        <text class="lb-cem" x="339" y="798">Greenmount</text>
                        <text class="lb-cem" x="339" y="822">Cemetery</text>
                        <text class="lb-cem" x="268" y="970">Saint Joseph</text>
                        <text class="lb-cem" x="268" y="993">Cemetery</text>
                        <text class="lb" transform="translate(227 757) rotate(-6)">Archibald Street</text>
                        <text class="lb" transform="translate(223 907) rotate(-4.500)">Pomeroy Street</text>
                        <text class="lb" transform="translate(224 764) rotate(79)">Germain Street</text>
                        <text class="lb" transform="translate(10 981) rotate(-63)">Hyde Street</text>
                        <text class="lb lb-big" transform="translate(155 946) rotate(86)">North Willard Street</text>
                        <text class="lb" transform="translate(67 1031) rotate(86)">Russell Street</text>
                        <text class="lb" transform="translate(224 1064) rotate(82)">Dans Court</text>
                        <text class="lb" transform="translate(489 651) rotate(76.600)">North Prospect Street</text>
                        <text class="lb" transform="translate(147 1175) rotate(-1)">North Street</text>
                        <text class="lb" transform="translate(567 1155) rotate(75)">North</text>
                        <text class="lb" transform="translate(611 1159) rotate(-1)">North Street</text>
                        <text class="lb" transform="translate(592 1064) rotate(-3)">Prospect Hill</text>
                        <text class="lb lb-big" transform="translate(745 733) rotate(8)">Riverside Avenue</text>
                        <text class="lb lb-grey" transform="translate(910 760) rotate(10)">Riverside Path</text>
                        <text class="lb" transform="translate(1027 839) rotate(57)">Hildred Drive</text>
                        <path id="hillside" class="no-paint" d="M890 910C890 955 925 995 990 925"/>
                        <text class="lb"><textPath href="#hillside">Hillside Terrace</textPath></text>
                        <text class="lb" transform="translate(890 1150) rotate(70)">Mc</text>
                    </g>
                </g>

                <!-- markers -->
                <path class="pin-shadow" d="M601 599 642 565Q650 550 632 552L606 565z"/>
                <path class="pin-shadow" d="M74 640 115 606Q123 591 105 593L79 606z"/>
                <path class="pin-shadow" d="M1160 756 1201 722Q1209 707 1191 709L1165 722z"/>
                <use class="pin-a" href="#pin"/>
                <use class="pin-b" href="#pin"/>
                <use class="pin-c" href="#pin"/>
                <use class="pin-d" href="#pin"/>
            </svg>

            <div class="zoom-ctrl">
                <div class="zoom-btn zoom-in">+</div>
                <div class="zoom-btn">&minus;</div>
            </div>
            <div class="attribution"><a href="#">Leaflet</a> | &copy; <a href="#">OpenStreetMap</a> contributors</div>
        </div>

        <div class="info">
            <h1>Kismayo Kitchen</h1>
            <p><b>Address:</b> 505 Riverside Ave</p>
            <p><b>Phone Number:</b> 802-448-3032</p>
            <p><b>Hours:</b> 11:30am-8pm</p>
            <p><b>Notes:</b> Somali inspired eats in humble digs, Great combo plate</p>
        </div>
    </div>
</body>

</html>
```

FILE: styles.css
```css
html,
body {
    margin: 0;
    padding: 0;
}

body {
    background-color: #fafad2;
    color: #000;
    font-family: Roboto, sans-serif;
    height: 1680px;
    overflow: hidden;
}

/* browser toolbar */
.toolbar {
    display: flex;
    align-items: center;
    height: 80px;
    padding-left: 5px;
    background-color: #f9f9fa;
    border-bottom: 2px solid #e2e2e2;
}

.back-btn {
    width: 64px;
    height: 64px;
    margin-right: 2px;
    border: 1px solid #b1b1b3;
    border-radius: 50%;
    background-color: #fff;
    display: flex;
    align-items: center;
    justify-content: center;
}

.tool-btn {
    width: 64px;
    height: 64px;
    display: flex;
    align-items: center;
    justify-content: center;
    flex: none;
}

.tool-first {
    margin-left: 177px;
}

.tool-sep {
    width: 1px;
    height: 66px;
    margin: 0 10px 0 7px;
    background-color: #d7d7db;
}

.icon {
    width: 36px;
    height: 36px;
}

.ic,
.ic-thin,
.ic-blue,
.ic-black {
    fill: none;
    stroke: #4f4f52;
    stroke-width: 3.5;
}

.ic-thin {
    stroke-width: 2;
}

.ic-off {
    stroke: #b4b4b6;
}

.ic-fill {
    fill: #5b5b5f;
}

.ic-blue {
    stroke: #0a84ff;
}

.ic-wide {
    stroke-width: 4.5;
    stroke-linecap: round;
}

.ic-black {
    stroke: #111;
    stroke-width: 2.5;
}

.abp {
    fill: #ef2a4c;
}

.abp-text {
    fill: #fff;
    font-family: "Liberation Sans", sans-serif;
    font-size: 14px;
    font-weight: 700;
    text-anchor: middle;
}

.ddg {
    fill: #de5833;
}

.ddg-in {
    fill: #fff;
    stroke: #de5833;
    stroke-width: 2;
}

.ddg-duck {
    fill: #ed6b3e;
    stroke: #fff;
}

.ddg-bill {
    fill: #f6c42c;
}

.ddg-tie {
    fill: #65bc46;
}

.react-bg {
    fill: #dc4d38;
}

.react-ring {
    fill: none;
    stroke: #f3c9c2;
    stroke-width: 1.5;
}

.react-man {
    fill: #2b211f;
}

.urlbar {
    display: flex;
    align-items: center;
    flex: none;
    width: 1499px;
    height: 55px;
    margin-left: 176px;
    padding-right: 13px;
    border: 2px solid #bcbcbc;
    border-radius: 7px;
    background-color: #fff;
    box-shadow: 0 1px 4px rgba(0, 0, 0, 0.1);
}

.url-icon {
    width: 30px;
    height: 30px;
    flex: none;
    margin-left: 13px;
}

.url-end {
    margin-left: 27px;
}

.url-sep {
    width: 1px;
    height: 42px;
    margin-left: 14px;
    background-color: #d7d7db;
}

.url-text {
    flex: 1;
    margin-left: 17px;
    font-family: "Liberation Sans", sans-serif;
    font-size: 29.300px;
    color: #111;
}

.url-rest {
    color: #737373;
}

/* page */
.page {
    display: grid;
    grid-template-columns: 460px 1200px 600px;
    padding: 96px 0 0 156px;
}

.sidebar {
    display: flex;
    flex-direction: column;
    align-items: center;
}

.logo {
    width: 380px;
    height: 340px;
    margin: 12px 0 0 8px;
    flex: none;
}

.arc-thin,
.arc-thick,
.rays {
    fill: none;
    stroke: #000;
}

.arc-thin {
    stroke-width: 2.500;
}

.arc-thick {
    stroke-width: 13;
}

.rays {
    stroke: #8a8a72;
    stroke-width: 3;
}

.logo-text {
    font-family: Lato, sans-serif;
    font-style: italic;
    font-size: 190px;
    text-anchor: middle;
}

.nav {
    display: flex;
    flex-direction: column;
    align-items: center;
    margin-top: 25px;
}

.nav a {
    color: #000;
    text-decoration: none;
    font-size: 32px;
    letter-spacing: 0.9px;
    line-height: 48px;
}

.info {
    width: 580px;
    padding-left: 81px;
}

h1 {
    margin: 30px 0 43px;
    font-size: 48px;
    font-weight: 400;
    letter-spacing: 1.700px;
    line-height: 56px;
}

.info p {
    margin: 0;
    font-size: 32px;
    letter-spacing: 0.8px;
    line-height: 48px;
}

.info b {
    font-weight: 500;
}

/* map */
.map {
    position: relative;
    width: 1200px;
    height: 1200px;
    overflow: hidden;
}

.map-svg {
    display: block;
    width: 1200px;
    height: 1200px;
}

.tiles {
    filter: blur(0.7px);
}

.tiles * {
    vector-effect: non-scaling-stroke;
}

.q1 {
    transform: translate(-6px, -8px) scale(0.408, 0.3827);
}

.q2 {
    transform: translate(584px, -8px) scale(0.408, 0.3827);
}

.q3 {
    transform: translate(-6px, 592px) scale(0.408, 0.3954);
}

.q4 {
    transform: translate(584px, 592px) scale(0.408, 0.3954);
}

.grey {
    fill: #e0dfdf;
}

.plain {
    fill: #f2efe9;
}

.school {
    fill: #e9d9e8;
}

.wood {
    fill: #add19e;
}

.park {
    fill: #c8facc;
}

.cem {
    fill: #aacbaf;
}

.water,
.tank {
    fill: #aad3df;
}

.plant {
    fill: #cfeab0;
    stroke: #8d9a86;
    stroke-width: 1;
}

.stripe {
    fill: none;
    stroke: #8e8a8e;
    stroke-width: 1;
}

.admin {
    fill: none;
    stroke: #a796b4;
    stroke-width: 2.200;
    stroke-dasharray: 12 4 3 4;
}

.power {
    fill: none;
    stroke: #8f8f8f;
    stroke-width: 1;
}

.node {
    fill: #dcdcdc;
    stroke: #7d7d7d;
    stroke-width: 1.500;
}

.road,
.casing,
.thin,
.service {
    fill: none;
    stroke: #fff;
    stroke-width: 7;
    stroke-linejoin: round;
}

.road.wide {
    stroke-width: 10;
}

.road.thin,
.thin {
    stroke-width: 3.500;
}

.casing {
    stroke: #c8c2bc;
    stroke-width: 10;
}

.service {
    stroke: #fff;
    stroke-width: 3.500;
    filter: drop-shadow(0 0 1px #aaa);
}

.trunk {
    fill: none;
    stroke: #f7fabf;
    stroke-width: 14;
}

.orange {
    fill: none;
    stroke: #fcd6a4;
    stroke-width: 16;
    stroke-linejoin: round;
}

.orange-case {
    fill: none;
    stroke: #d5ad72;
    stroke-width: 17.500;
    stroke-linejoin: round;
}

.cycle {
    fill: none;
    stroke: #3a3af0;
    stroke-width: 2.200;
    stroke-dasharray: 6 4;
}

.rail {
    fill: none;
    stroke: #6e6e6e;
    stroke-width: 6;
}

.rail-dash {
    fill: none;
    stroke: #f3f3f3;
    stroke-width: 2;
    stroke-dasharray: 14 14;
}

.rail-bed {
    fill: none;
    stroke: #f2efe9;
    stroke-width: 10;
}

.foot {
    fill: none;
    stroke: #f68a7c;
    stroke-width: 2.600;
    stroke-dasharray: 3 4;
}

.track {
    fill: none;
    stroke: #ac8330;
    stroke-width: 2.800;
    stroke-dasharray: 7 5;
}

.cul {
    fill: #d9d9d9;
    stroke: #fff;
    stroke-width: 7;
}

.bld {
    fill: #d9d0c9;
    stroke: #c9bdb2;
    stroke-width: 1;
}

.bld-big {
    fill: #d9d0c9;
    stroke: #c6b6aa;
    stroke-width: 1;
}

.bld-pale {
    fill: #e8e6e4;
    stroke: #cfc5bc;
    stroke-width: 1;
}

.bld-dark {
    fill: #bfb1a4;
    stroke: #a99a8d;
    stroke-width: 1;
}

.lot {
    fill: #eeeeee;
    stroke: #d5c3ba;
    stroke-width: 1;
}

.trees {
    fill: none;
    stroke: #86b378;
    stroke-width: 1.200;
}

.graves {
    fill: #83ad8a;
}

.shield {
    fill: #f7e3c9;
    stroke: #ecd1ab;
    stroke-width: 1.500;
}

.star {
    fill: none;
    stroke: #2f2f2f;
    stroke-width: 2.500;
}

.cross {
    fill: #111;
}

.theatre {
    fill: #8a5a12;
}

.theatre-fade {
    fill: #7cc49c;
}

.no-paint {
    fill: none;
}

/* map labels */
.labels text {
    font-family: "Noto Sans", sans-serif;
    paint-order: stroke;
    stroke-linejoin: round;
}

.lb {
    font-size: 17.600px;
    fill: #333;
    stroke: rgba(255, 255, 255, 0.75);
    stroke-width: 2.500px;
}

.lb-big {
    font-size: 20px;
    fill: #4a3d20;
    stroke: none;
}

.lb-grey {
    fill: #555;
}

.lb-water,
.lb-admin,
.lb-park,
.lb-plant,
.lb-cem {
    font-style: italic;
    stroke: rgba(255, 255, 255, 0.5);
    stroke-width: 2px;
}

.lb-water {
    font-size: 19px;
    fill: #5b8fd2;
}

.labels .lb-admin {
    font-style: normal;
    font-size: 19px;
    fill: #9c7da0;
}

.lb-park {
    font-size: 24px;
    fill: #2f9a4c;
    text-anchor: middle;
}

.lb-plant {
    font-size: 17.500px;
    fill: #734a6f;
    text-anchor: middle;
}

.lb-cem {
    font-size: 20px;
    fill: #4a6854;
    text-anchor: middle;
}

.lb-p {
    font-size: 28px;
    fill: #8fc7ea;
    text-anchor: middle;
}

.lb-shield {
    font-family: "Noto Sans", sans-serif;
    font-size: 21px;
    fill: #8b6a3a;
    text-anchor: middle;
}

/* markers */
.pin-body {
    fill: url(#pinfill);
    stroke: #2a72b0;
    stroke-width: 0.6;
}

.pin-dot {
    fill: #fff;
}

.pin-shadow {
    fill: #000;
    opacity: 0.4;
    filter: url(#soft);
}

.pin-a {
    transform: translate(577px, 520px) scale(1.92);
}

.pin-b {
    transform: translate(48.500px, 561px) scale(1.92);
}

.pin-c {
    transform: translate(1136.500px, 677px) scale(1.92);
}

.pin-d {
    transform: translate(217px, 1184px) scale(1.92);
}

/* map controls */
.zoom-ctrl {
    position: absolute;
    top: 20px;
    left: 21px;
    width: 60px;
    border: 4px solid rgba(0, 0, 0, 0.25);
    border-radius: 8px;
    background-clip: padding-box;
}

.zoom-btn {
    height: 60px;
    overflow: hidden;
    background-color: #fff;
    color: #000;
    text-align: center;
    font-family: "Liberation Sans", sans-serif;
    font-size: 46px;
    line-height: 68px;
}

.zoom-in {
    border-bottom: 2px solid #ccc;
    border-radius: 4px 4px 0 0;
}

.attribution {
    position: absolute;
    right: 0;
    bottom: 0;
    height: 33px;
    padding: 0 9px;
    background-color: rgba(255, 255, 255, 0.8);
    font-family: "Liberation Sans", sans-serif;
    font-size: 22.400px;
    line-height: 33px;
    color: #333;
}

.attribution a {
    color: #0078a8;
    text-decoration: none;
}
```
